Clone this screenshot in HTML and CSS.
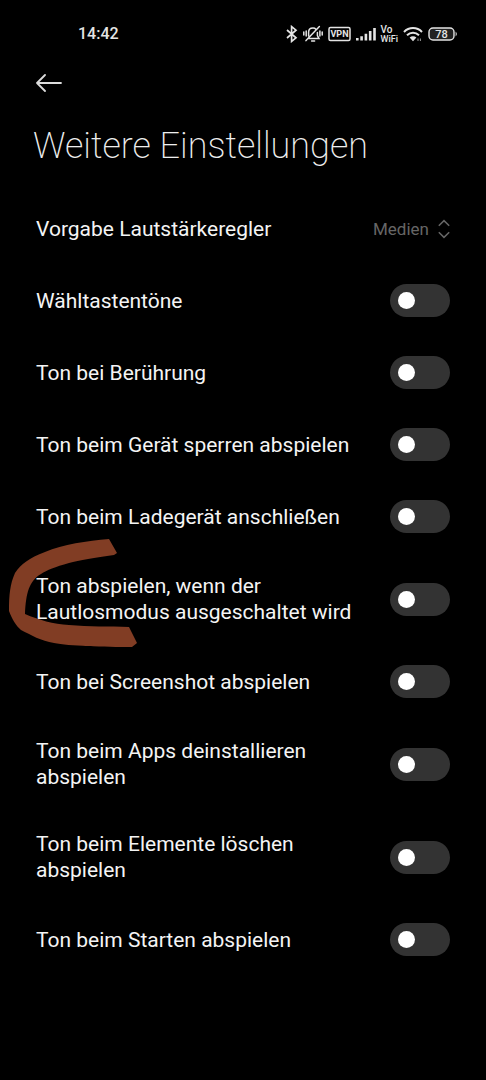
FILE: index.html
```html
<!DOCTYPE html>
<html lang="de">

<head>
	<meta charset="utf-8">
	<meta name="viewport" content="width=device-width, initial-scale=1">
	<title>Weitere Einstellungen</title>
	<link rel="stylesheet" href="styles.css">
</head>

<body>
	<div class="statusbar">
		<span class="clock">14:42</span>
		<div class="status-icons">
			<!-- bluetooth -->
			<svg width="12" height="18" viewBox="0 0 12 18" fill="none" stroke="#e4e4e4" stroke-width="1.7">
				<path d="M1 5L10 12.8L5.6 16.4V1.6L10 5.2L1 13" />
			</svg>
			<!-- bell, muted -->
			<svg width="20" height="18" viewBox="0 0 20 18" fill="none" stroke="#e4e4e4" stroke-width="1.5" stroke-linecap="round">
				<path d="M5.6 11V7.2C5.6 4.6 7.4 3 10 3C11.2 3 12.2 3.4 12.9 4.2M14.4 7.4V10.5L16 13.6H6M8.6 16H11.6M16.4 1.6L3 15.6" />
				<path d="M3.2 6V11M.8 7V10M16.9 6V11M19.2 7V10" />
			</svg>
			<!-- vpn -->
			<svg class="vpn" width="23" height="16" viewBox="0 0 23 16">
				<rect x="1" y="1.5" width="21" height="13" rx="1.5" fill="none" stroke="#e4e4e4" stroke-width="1.5" />
				<text x="11.5" y="11" text-anchor="middle">VPN</text>
			</svg>
			<!-- signal -->
			<svg width="20" height="14" viewBox="0 0 20 14" fill="#e4e4e4">
				<path d="M0 11h2.6v2.5H0zM4.3 9.2h2.6v4.3H4.3zM8.6 6.8h2.6v6.7H8.6zM12.9 4h2.6v9.5h-2.6zM17.2 1h2.6v12.5h-2.6z" />
			</svg>
			<span class="vowifi"><span>Vo</span><br>WiFi</span>
			<!-- wifi -->
			<svg width="20" height="16" viewBox="0 0 20 16" fill="none" stroke="#e4e4e4" stroke-width="2">
				<path d="M1 6C6 .8 14 .8 19 6M4 9.2C7.5 5.8 12.5 5.8 16 9.2" />
				<path d="M6.6 11.6L10 15.2L13.4 11.6C11.4 9.8 8.6 9.8 6.6 11.6Z" fill="#e4e4e4" stroke="none" />
				<path d="M15 12.5V15M17.4 12.5V15" stroke="#999" stroke-width="1" />
			</svg>
			<!-- battery -->
			<svg class="battery" width="30" height="14" viewBox="0 0 30 14">
				<rect x="1" y="1" width="25" height="12" rx="4" fill="#222" stroke="#e4e4e4" stroke-width="1.4" />
				<path d="M27.6 4.5Q30 7 27.6 9.5Z" fill="#e4e4e4" />
				<text x="13.5" y="11" text-anchor="middle">78</text>
			</svg>
		</div>
	</div>

	<header>
		<button class="back" type="button" aria-label="Zurück">
			<svg width="26" height="18" viewBox="0 0 26 18" fill="none" stroke="#dcdcdc" stroke-width="1.8" stroke-linecap="round" stroke-linejoin="round">
				<path d="M9 1L1 9L9 17M1 9H25" />
			</svg>
		</button>
		<h1>Weitere Einstellungen</h1>
	</header>

	<main>
		<div class="row">
			<label for="regler">Vorgabe Lautstärkeregler</label>
			<div class="picker">
				<select id="regler">
					<option>Medien</option>
				</select>
				<svg width="12" height="20" viewBox="0 0 12 20" fill="none" stroke="#666" stroke-width="1.5">
					<path d="M.8 6.8L6 1.6L11.2 6.8M.8 13.2L6 18.4L11.2 13.2" />
				</svg>
			</div>
		</div>
		<div class="row">
			<label for="waehltasten">Wähltastentöne</label>
			<input type="checkbox" id="waehltasten">
		</div>
		<div class="row">
			<label for="beruehrung">Ton bei Berührung</label>
			<input type="checkbox" id="beruehrung">
		</div>
		<div class="row">
			<label for="sperren">Ton beim Gerät sperren abspielen</label>
			<input type="checkbox" id="sperren">
		</div>
		<div class="row">
			<label for="ladegeraet">Ton beim Ladegerät anschließen</label>
			<input type="checkbox" id="ladegeraet">
		</div>
		<div class="row marked">
			<label for="lautlos">Ton abspielen, wenn der Lautlosmodus ausgeschaltet wird</label>
			<input type="checkbox" id="lautlos">
			<svg class="marker" width="130" height="110" viewBox="0 0 130 110" fill="#813d24">
				<path d="M100 0L108 14L105 16C86 19 70 21 60 24C46 28 38 31 32 35C20 42 17 54 16 75C30 81 44 85 60 86C80 88 100 87 120 88L128 104L123 108C95 108 60 107 45 104C32 102 22 96 12 91C7 87 3 80 0 72C0 56 1 45 6 34C12 25 20 19 36 13C54 5 78 2 100 0Z" />
			</svg>
		</div>
		<div class="row">
			<label for="screenshot">Ton bei Screenshot abspielen</label>
			<input type="checkbox" id="screenshot">
		</div>
		<div class="row">
			<label for="apps">Ton beim Apps deinstallieren abspielen</label>
			<input type="checkbox" id="apps">
		</div>
		<div class="row">
			<label for="elemente">Ton beim Elemente löschen abspielen</label>
			<input type="checkbox" id="elemente">
		</div>
		<div class="row">
			<label for="starten">Ton beim Starten abspielen</label>
			<input type="checkbox" id="starten">
		</div>
	</main>
</body>

</html>
```
FILE: styles.css
```css
body {
	margin: 0;
	background: #000;
	color: #f4f4f4;
	font-family: Roboto, "Liberation Sans", sans-serif;
	font-size: 21px;
	line-height: 26px;
}

.statusbar {
	display: flex;
	align-items: center;
	justify-content: space-between;
	height: 36px;
	padding: 16px 28px 0 78px;
}

.clock {
	font-size: 16px;
	font-weight: 500;
	line-height: 20px;
	color: #e4e4e4;
}

.status-icons {
	display: flex;
	align-items: center;
	gap: 5px;
}

.vpn text {
	fill: #e4e4e4;
	font-size: 9px;
	font-weight: 700;
}

.vowifi {
	color: #e4e4e4;
	font-size: 9px;
	font-weight: 500;
	line-height: 9px;
}

.vowifi span {
	font-size: 10px;
}

.battery text {
	fill: #e4e4e4;
	font-size: 11px;
	font-weight: 500;
}

.back {
	display: block;
	margin: 16px 0 0 28px;
	padding: 6px 8px;
	border: 0;
	background: none;
	line-height: 0;
}

h1 {
	margin: 26px 33px 25px;
	color: #eee;
	font-size: 36px;
	font-weight: 200;
	line-height: 44px;
}

.row {
	display: flex;
	align-items: center;
	justify-content: space-between;
	gap: 24px;
	box-sizing: border-box;
	min-height: 72px;
	padding: 20px 36px 21px;
}

.picker {
	display: flex;
	align-items: center;
	gap: 9px;
}

select {
	appearance: none;
	padding: 0;
	border: 0;
	background: none;
	color: #666;
	font-family: inherit;
	font-size: 17px;
	line-height: 20px;
}

input[type=checkbox] {
	appearance: none;
	flex: none;
	width: 60px;
	height: 33px;
	margin: -4px 0;
	padding: 8px;
	box-sizing: border-box;
	border-radius: 17px;
	background: #333;
}

input[type=checkbox]::before {
	content: "";
	display: block;
	width: 17px;
	height: 17px;
	border-radius: 50%;
	background: #fff;
}

input[type=checkbox]:checked {
	padding-left: 35px;
	background: #0d84ff;
}

.marked {
	position: relative;
}

/* brush stroke drawn around the setting */
.marker {
	position: absolute;
	left: 9px;
	top: -14px;
	pointer-events: none;
}
```
